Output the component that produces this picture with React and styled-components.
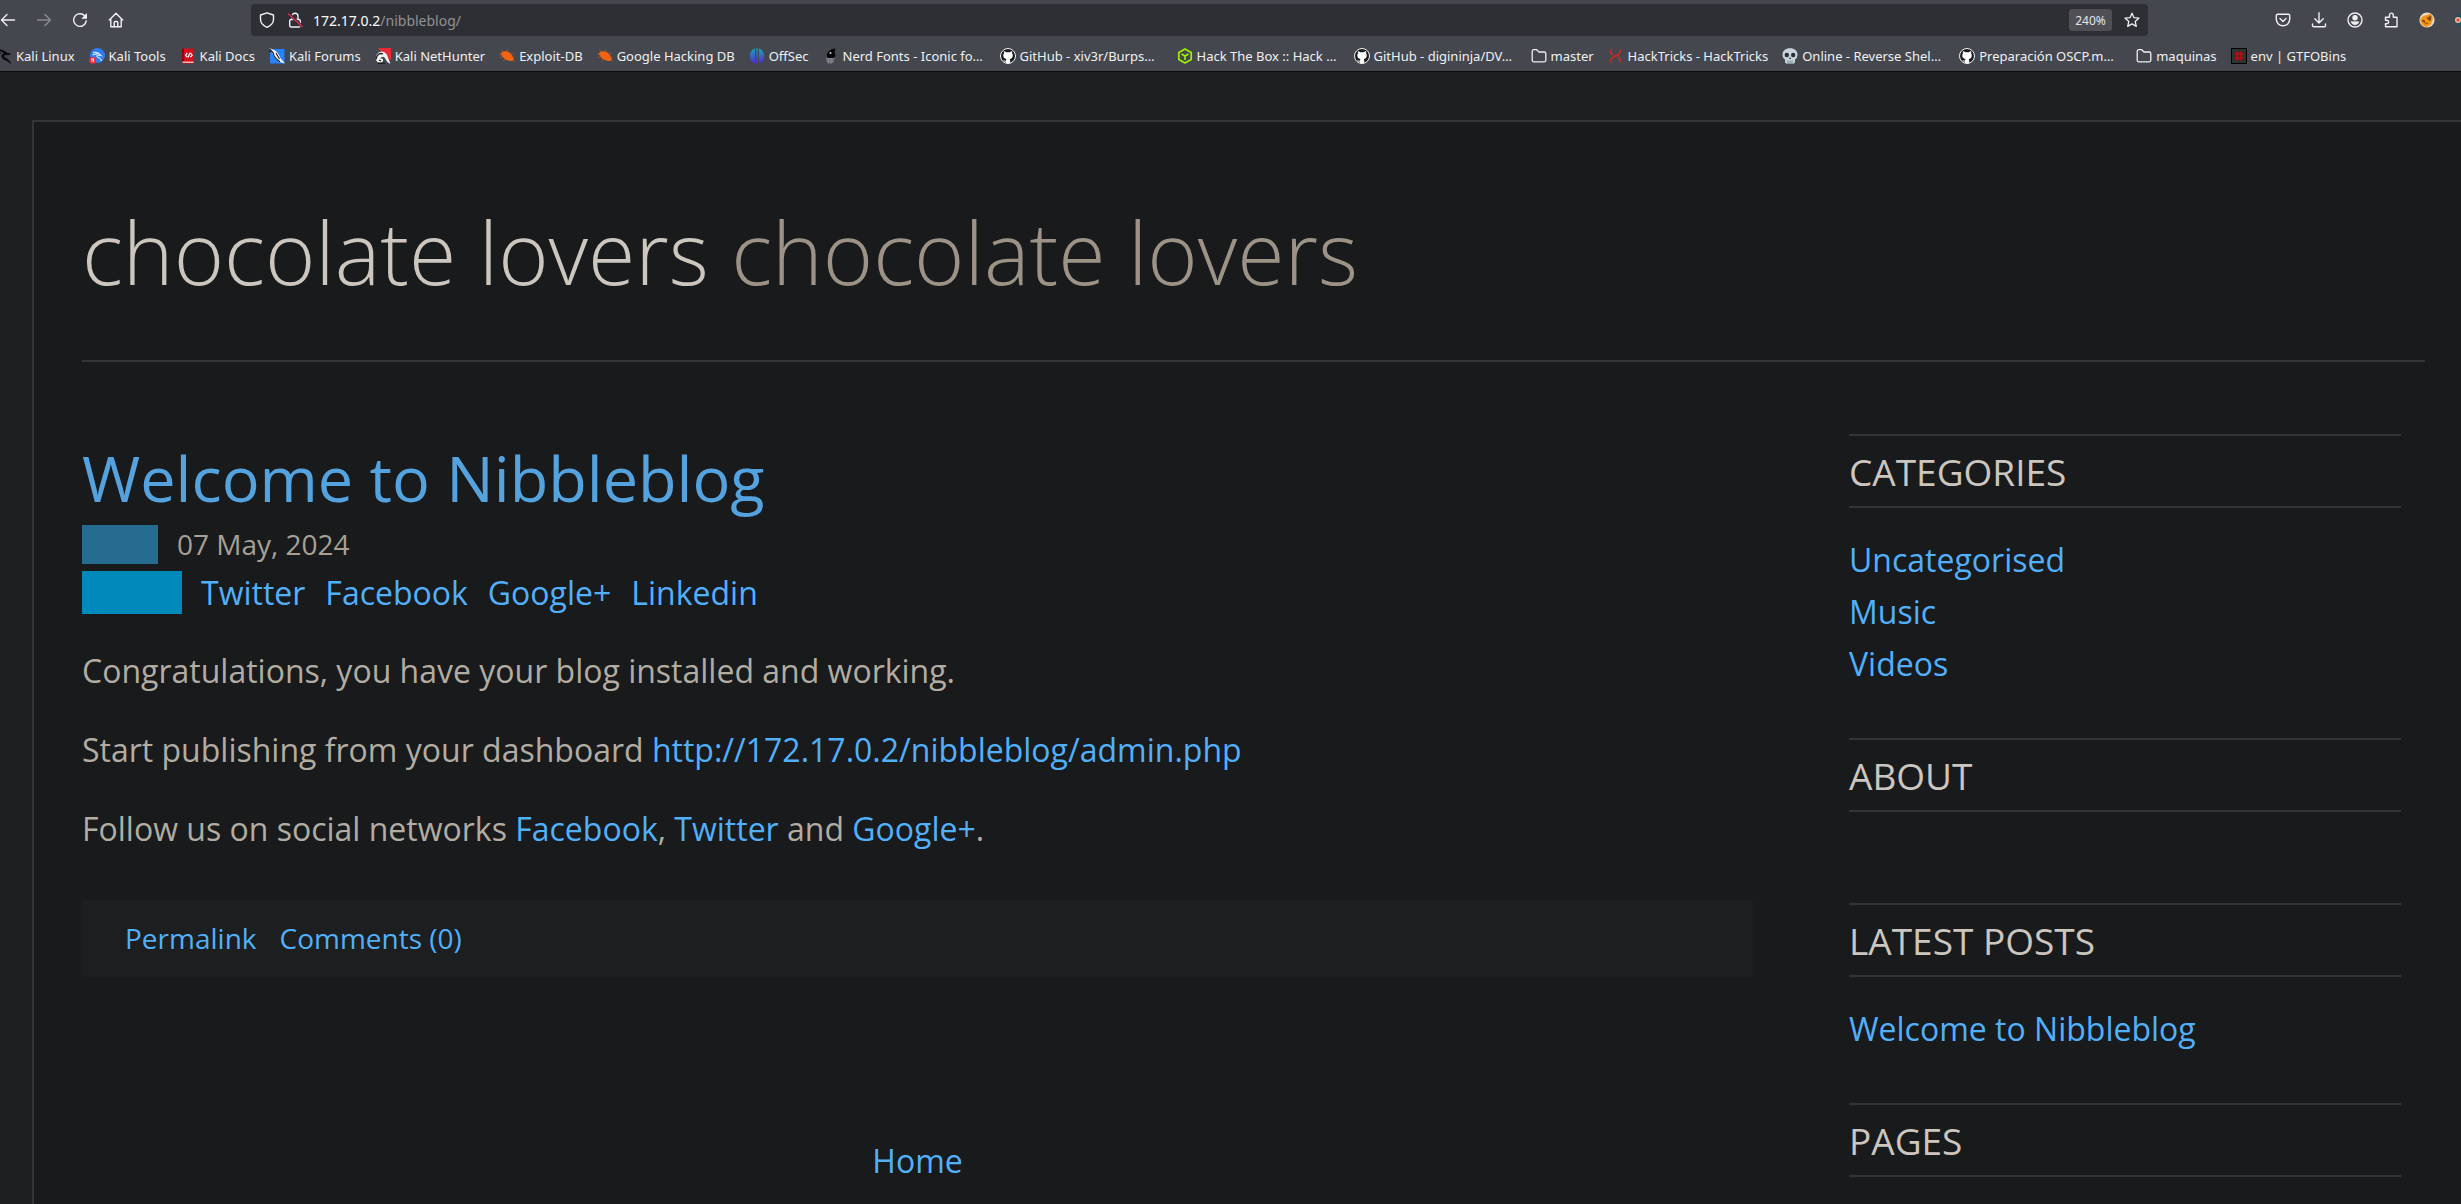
import React from "react";
import styled, { createGlobalStyle } from "styled-components";

const chrome = "#44474e";
const ink = "#181a1b";

const GlobalStyle = createGlobalStyle`
  *, *::before, *::after { box-sizing: border-box; }
  body { margin: 0; background: #1c1e1f; }
  h1, h2, h3, p, ul { margin: 0; padding: 0; font-weight: 400; }
  ul { list-style: none; }
  a { text-decoration: none; color: inherit; }
  svg { display: block; flex: none; }
`;

const Window = styled.div`
  display: flex;
  flex-direction: column;
  min-height: 100vh;
  overflow: hidden;
  font-family: "Open Sans", "Noto Sans", sans-serif;
`;

/* ---------- browser chrome ---------- */

const Chrome = styled.header`
  background: ${chrome};
  border-bottom: 1px solid #0c0c0d;
  color: #f0f0f2;
  font-family: "Noto Sans", sans-serif;
`;

const NavBar = styled.div`
  display: flex;
  align-items: center;
  height: 40px;
`;

const IconButton = styled.button`
  display: flex;
  align-items: center;
  justify-content: center;
  flex: none;
  width: ${(p) => p.$width || 36}px;
  height: 32px;
  padding: 0;
  border: 0;
  background: none;
  color: inherit;
  opacity: ${(p) => (p.disabled ? 0.4 : 1)};
`;

const NavGroup = styled.div`
  display: flex;
  flex: none;
  width: 251px;
  margin-left: -10px;
  margin-right: 10px;
`;

const AddressBar = styled.form`
  display: flex;
  align-items: center;
  flex: 1;
  height: 32px;
  padding-left: 2px;
  border-radius: 4px;
  background: #2e2f34;
  font-size: 14px;
`;

const Host = styled.label`
  padding-left: 4px;
  color: #fbfbfe;
`;

const PathInput = styled.input`
  flex: 1;
  min-width: 0;
  padding: 0;
  border: 0;
  outline: 0;
  background: none;
  color: #919196;
  font: inherit;
`;

const ZoomButton = styled.button`
  width: 43px;
  height: 22px;
  margin-right: 4px;
  padding: 0;
  border: 0;
  border-radius: 3px;
  background: #4f4f55;
  color: #e4e4e6;
  font: 12px "Noto Sans", sans-serif;
`;

const Extensions = styled.div`
  display: flex;
  flex: none;
  justify-content: flex-end;
  width: 313px;
  margin-right: -20px;
  margin-left: 20px;
`;

const Bookmarks = styled.nav`
  display: flex;
  align-items: center;
  gap: 14px;
  height: 31px;
  margin-left: -4px;
  white-space: nowrap;
  font-size: 13px;
`;

const Bookmark = styled.a`
  display: flex;
  align-items: center;
  flex: none;
  gap: 4px;
`;

const BookmarkLabel = styled.span`
  width: ${(p) => (p.$clipped ? "143px" : "auto")};
`;

/* ---------- blog ---------- */

const Page = styled.div`
  flex: 1;
  margin: 48px 0 0 32px;
  padding: 70px 36px 0 48px;
  border: 2px solid #333638;
  border-right: 0;
  border-bottom: 0;
  background: ${ink};
  color: #b2aca2;
  font-size: 32px;
  line-height: 48px;
`;

const BlogHeader = styled.header`
  padding-bottom: 48px;
  border-bottom: 2px solid #333638;
`;

const BlogTitle = styled.h1`
  color: #ccc6bf;
  font-size: 86px;
  font-weight: 300;
  line-height: 120px;
`;

const Slogan = styled.span`
  color: #9c9386;
`;

const Columns = styled.div`
  display: flex;
  gap: 96px;
  padding: 72px 24px 0 0;
`;

const Main = styled.main`
  flex: 1;
  min-width: 0;
`;

const Link = styled.a`
  color: #52b0fb;
`;

const PostTitle = styled.h2`
  margin-bottom: 3px;
  color: #54a3df;
  font-size: 63px;
  line-height: 88px;
`;

const MetaRow = styled.div`
  display: flex;
  gap: 19px;
  height: ${(p) => p.$height}px;
  margin-bottom: ${(p) => p.$after}px;
  font-size: ${(p) => p.$size}px;
  line-height: ${(p) => p.$line}px;
  color: #a8a095;
`;

const Swatch = styled.span`
  width: ${(p) => p.$width}px;
  background: ${(p) => p.$color};
`;

const ShareLinks = styled.div`
  display: flex;
  gap: 20px;
`;

const PostBody = styled.div`
  display: flex;
  flex-direction: column;
  gap: 31px;
`;

const PostFooter = styled.footer`
  display: flex;
  align-items: center;
  gap: 23px;
  height: 77px;
  margin-top: 47px;
  padding: 0 43px 2px;
  background: #1c1e1f;
  font-size: 28px;
`;

const Pager = styled.nav`
  margin-top: 160px;
  text-align: center;
`;

const Sidebar = styled.aside`
  flex: none;
  width: 552px;
`;

const Widget = styled.section`
  padding-bottom: 48px;
  &:last-child { padding-bottom: 0; }
`;

const WidgetTitle = styled.h3`
  padding-top: 2px;
  border: solid #333638;
  border-width: 2px 0;
  color: #ccc6bf;
  font-size: 37px;
  line-height: 68px;
  text-transform: uppercase;
`;

const WidgetList = styled.ul`
  min-height: 17px;
  margin-top: 26px;
  line-height: 52px;
`;

/* ---------- icons ---------- */

const Line = ({ children, size = 16, w = 1.4 }) => (
  <svg width={size} height={size} viewBox="0 0 16 16" fill="none" stroke="currentColor"
    strokeWidth={w} strokeLinecap="round" strokeLinejoin="round" aria-hidden="true">
    {children}
  </svg>
);
const Art = ({ children }) => (
  <svg width="16" height="16" viewBox="0 0 16 16" aria-hidden="true">{children}</svg>
);

const Back = () => <Line><path d="M14.500 8H1.500M7 2.500L1.500 8 7 13.500" /></Line>;
const Forward = () => <Line><path d="M1.500 8h13M9 2.500L14.500 8 9 13.500" /></Line>;
const Reload = () => (
  <Line><path d="M14.200 8.800A6.300 6.300 0 1 1 11.600 2.900L13 4" /><path d="M15 1v5.700H9.300z" fill="currentColor" stroke="none" /></Line>
);
const HomeIcon = () => (
  <Line><path d="M1.300 8L8 1.300 14.700 8M2.800 7v7.700h10.400V7" /><path d="M6.200 14.500V10.500a1 1 0 0 1 1-1h1.600a1 1 0 0 1 1 1v4" /></Line>
);
const Shield = () => (
  <Line><path d="M8 .8L14.500 3v4.500c0 3.500-2.700 6-6.500 7.800-3.800-1.800-6.500-4.300-6.500-7.800V3z" /></Line>
);
const Lock = () => (
  <Line><rect x="2.700" y="7.500" width="10.600" height="7.500" rx="1.500" /><path d="M5 7.300V4.200a3 3 0 0 1 6 0v3.100" />
    <path d="M2.500 2.200L15 14.500" stroke="#2e2f34" strokeWidth="3" /><path d="M1.500 2L15 14.500" stroke="#e22850" strokeWidth="1.500" /></Line>
);
const Star = () => (
  <Line w={1.300}><path d="M8 1.200l2 4.500 4.900.5-3.700 3.300 1.100 4.900L8 11.900l-4.300 2.500 1.100-4.900L1.100 6.200l4.900-.5z" /></Line>
);
const Pocket = () => (
  <Line><path d="M2.700 2.200h10.600a1.400 1.400 0 0 1 1.400 1.400V7.300a6.700 6.500 0 0 1-13.400 0V3.600a1.400 1.400 0 0 1 1.400-1.400z" /><path d="M5 6.500l3 3 3-3" /></Line>
);
const Download = () => (
  <Line><path d="M8 .8v9.700M3.800 6.800L8 11l4.200-4.200M1.500 12v1.500a1.300 1.300 0 0 0 1.300 1.300h10.400a1.300 1.300 0 0 0 1.300-1.300V12" /></Line>
);
const Account = () => (
  <Line><circle cx="8" cy="8" r="7" /><circle cx="8" cy="5.800" r="2" fill="currentColor" /><path d="M4.300 9.700h7.400c-.3 2-1.700 3-3.700 3s-3.400-1-3.700-3z" fill="currentColor" strokeWidth=".6" /></Line>
);
const Puzzle = () => (
  <Line><path d="M2.500 14.800V11.800h1.300a1.800 1.800 0 0 0 0-3.600H2.500V5.200h4V3a1.900 1.900 0 0 1 3.800 0v2.200h3.700v9.600z" /></Line>
);
const Fox = () => (
  <Art><circle cx="8" cy="8" r="7.600" fill="#e9d9c2" /><path d="M1 8l3-4 4-1 4-1.500 2 5-2.500 6.500-4.500 2L3 12.500z" fill="#f39314" />
    <path d="M3 9l2-1 1 3M8 6l4-2-1 5zM6 12l3-1" fill="#7b4411" stroke="#7b4411" strokeWidth=".8" /></Art>
);
const Creature = () => (
  <Art><path d="M0 7c1-4 4-6 7-6h9v14H6c-3 0-6-4-6-8z" fill="#1e5262" /><circle cx="3" cy="8" r="3" fill="#f0b9a0" /><circle cx="3" cy="8" r="1.500" fill="#e33c2c" /></Art>
);

const Dragon = () => (
  <Art><path d="M2 1.500c4 .5 7 1.500 9 3.700l3.500.8-2.500.8c-3-.7-4.500 0-4.200 1.600.4 2.200 5 1.400 6.500 7.100-2.300-4-7.500-3.200-8.200-6.500C5.300 7 6.500 6 8.500 5.700 6.500 3.500 4 3 2 1.500zM5 5c-1 .5-2 1-3 2" fill="#08080a" stroke="#08080a" strokeWidth=".9" /></Art>
);
const Tools = () => (
  <Art><circle cx="8.500" cy="7.500" r="7.500" fill="#2b7df0" /><path d="M4 4.500c3-.5 6 .5 8 3-3-1-5 0-3.500 1.500 2 .6 3.500 1.500 4 4M3.500 7c2-1 3-1.200 5-.8" fill="none" stroke="#cfe4ff" strokeWidth="1.300" />
    <circle cx="3.600" cy="12.400" r="3.400" fill="#ea2a3d" /><path d="M2.100 10.900h3M3 10.900v3.200M4.500 10.900v3.200" stroke="#fff" strokeWidth=".8" /></Art>
);
const Docs = () => (
  <Art><path d="M2 .5h11.500v15H3L2 14z" fill="#d40f1d" /><path d="M2 .5h2v13H2z" fill="#85040e" /><path d="M2.500 14.200h11" stroke="#f4dede" strokeWidth="1.200" />
    <path d="M7.300 5L5.500 7.200l1.800 2M10 4.800L8 9.500M10.300 5l1.900 2.200-1.900 2" fill="none" stroke="#fff" strokeWidth="1.200" /></Art>
);
const Forums = () => (
  <Art><path d="M1 1h14.500v14.500H1z" fill="#2583ff" /><path d="M0 0l5.500 2.200c3 1.500 5 5 6 8l4.500 5.300-5-1.500C7 12 4 7.500 3.500 5z" fill="#f5f7fb" /><path d="M.5.800l3.500 3.700c.5 3 3 6.500 7 9.300M7 5l3.500 6M0 3l2 1" stroke="#15181e" fill="none" strokeWidth="1.100" /></Art>
);
const NetHunter = () => (
  <Art><path d="M3 0h13v12.500L11 9z" fill="#ee2737" /><path d="M1 12C0 6 4.500 2 9 4c4 2 4 7 6.500 11.500C12 15 11 11.500 9.500 9.500 8 8 5.500 9 5.500 11c1.500-1 3 0 2.500 2-1 2.500-6 2-7-1z" fill="#f4f4f4" /><path d="M1 11.500C1.500 6.500 5 4.500 8 6M4 12l2 1M3 15.300h7" fill="none" stroke="#1b1c20" strokeWidth="1.300" /></Art>
);
const Bug = () => (
  <Art><path d="M2 5c3-3 8-2 10.500 1.500 1.300 1.900 2 3.500 2.500 6-3.500 1-8 0-10.500-2.800C3 8.300 2 7 2 5z" fill="#f26411" />
    <path d="M4 4L2.500 1.800M8 3.800L8.500 1.500M11.300 6l3-1M3 9L.5 9.700M6 11l-1.500 2.500M12.500 9l3 .5M2 6.500L0 6M13.500 11.500l2 2" stroke="#b9541d" strokeWidth=".8" /></Art>
);
const OffSec = () => (
  <Art><defs><linearGradient id="offsec" gradientUnits="userSpaceOnUse" x1="0" y1="0" x2="0" y2="16"><stop offset="0" stopColor="#16a6b8" /><stop offset="1" stopColor="#5b25d6" /></linearGradient></defs>
    <path d="M6 .5v15C2.500 14.500 1 11.500 1 8s1.500-6.500 5-7.500zM7.300.3h1.400v15.400H7.300zM10 .5c3.500 1 5 4 5 7.500s-1.500 6.500-5 7.500z" fill="url(#offsec)" /></Art>
);
const Nerd = () => (
  <Art><path d="M3 9.500h8.500l-.8 5L7 16l-3-1.200z" fill="#6a6c70" /><path d="M3 10.500h8.500M3.500 13h7.500M5.500 9.500v6M8.500 9.500v6" stroke="#8d8f93" strokeWidth=".6" /><path d="M9 1l3.500-.5-1 3.500 1 4-2 2H4.500L3.500 7 5 4z" fill="#060607" /><circle cx="7.500" cy="5" r="1" fill="#d6d6d6" /></Art>
);
const GitHub = () => (
  <Art><circle cx="8" cy="8" r="7.500" fill="#1b1c20" stroke="#f4f4f5" /><path d="M3.900 3.200c1 0 1.800.5 2.400 1h3.400c.6-.5 1.400-1 2.400-1 .2.700.2 1.500 0 2 .9 1 .9 4-.4 5-.6.5-1.300.7-2 .8.400.5.500 1 .5 1.600v2.600H6v-1.500c-1.500.3-2-.5-2.600-1.600 1 .5 1.600.9 2.600.7 0-.7.200-1.300.5-1.800-2.500-.3-3.200-1.800-3.200-3.500 0-1 .2-1.700.7-2.300-.2-.7-.3-1.400-.1-2z" fill="#fff" /></Art>
);
const Cube = () => (
  <Art><path d="M8 1l6.200 3.500v7L8 15l-6.200-3.500v-7zM4.500 6L8 8l3.500-2M8 8v4" fill="none" stroke="#9fef00" strokeWidth="1.700" strokeLinejoin="round" /></Art>
);
const Folder = () => (
  <Line w={1.300}><path d="M1.200 3.200A1.500 1.500 0 0 1 2.700 1.700h3L8 4h5.300a1.500 1.500 0 0 1 1.500 1.500v6.800a1.500 1.500 0 0 1-1.500 1.500H2.700a1.500 1.500 0 0 1-1.500-1.500z" /></Line>
);
const Tricks = () => (
  <Art><path d="M3 1.500v3.500l1.500 2M3 14.500V11l3-2.500 4-1.500L12 4.500v-3M12 14.500V11l-1.500-2" fill="none" stroke="#e0241a" strokeWidth="1.500" /></Art>
);
const Skull = () => (
  <Art><path d="M8 .2c4.500 0 7.500 2.500 7.500 6.500 0 2.300-1 3.800-2.500 4.800v3l-1.500 1.300H4.500L3 14.500v-3C1.500 10.500.5 9 .5 6.700.5 2.700 3.500.2 8 .2z" fill="#c7d3dc" />
    <circle cx="4.800" cy="7" r="2.200" fill="#24303a" /><circle cx="11.200" cy="7" r="2.200" fill="#24303a" /><path d="M8 9l1 2H7z" fill="#24303a" /><path d="M6 12.500v3.500M8 12.500v3.500M10 12.500v3.500" stroke="#5f6e7a" strokeWidth=".8" /></Art>
);
const Hash = () => (
  <Art><rect x=".5" y=".5" width="15" height="15" fill="#2f3234" stroke="#000" /><path d="M6 3v10M10 3v10M3.500 6h9M3.500 10h9" stroke="#c8080c" strokeWidth="1.500" /></Art>
);

const bookmarks = [
  { icon: Dragon, label: "Kali Linux" },
  { icon: Tools, label: "Kali Tools" },
  { icon: Docs, label: "Kali Docs" },
  { icon: Forums, label: "Kali Forums" },
  { icon: NetHunter, label: "Kali NetHunter" },
  { icon: Bug, label: "Exploit-DB" },
  { icon: Bug, label: "Google Hacking DB" },
  { icon: OffSec, label: "OffSec" },
  { icon: Nerd, label: "Nerd Fonts - Iconic fo…", clipped: true },
  { icon: GitHub, label: "GitHub - xiv3r/Burps…", clipped: true },
  { icon: Cube, label: "Hack The Box :: Hack …", clipped: true },
  { icon: GitHub, label: "GitHub - digininja/DV…", clipped: true },
  { icon: Folder, label: "master" },
  { icon: Tricks, label: "HackTricks - HackTricks" },
  { icon: Skull, label: "Online - Reverse Shel…", clipped: true },
  { icon: GitHub, label: "Preparación OSCP.m…", clipped: true },
  { icon: Folder, label: "maquinas" },
  { icon: Hash, label: "env | GTFOBins" },
];

const widgets = [
  { title: "Categories", links: ["Uncategorised", "Music", "Videos"] },
  { title: "About", links: [] },
  { title: "Latest posts", links: ["Welcome to Nibbleblog"] },
];

export default function App() {
  return (
    <Window>
      <GlobalStyle />
      <Chrome>
        <NavBar>
          <NavGroup>
            <IconButton aria-label="Back"><Back /></IconButton>
            <IconButton aria-label="Forward" disabled><Forward /></IconButton>
            <IconButton aria-label="Reload"><Reload /></IconButton>
            <IconButton aria-label="Home"><HomeIcon /></IconButton>
          </NavGroup>
          <AddressBar>
            <IconButton type="button" $width={28} aria-label="Tracking protection"><Shield /></IconButton>
            <IconButton type="button" $width={28} aria-label="Connection not secure"><Lock /></IconButton>
            <Host htmlFor="address">172.17.0.2</Host>
            <PathInput id="address" defaultValue="/nibbleblog/" />
            <ZoomButton type="button">240%</ZoomButton>
            <IconButton type="button" $width={32} aria-label="Bookmark this page"><Star /></IconButton>
          </AddressBar>
          <Extensions>
            <IconButton aria-label="Save to Pocket"><Pocket /></IconButton>
            <IconButton aria-label="Downloads"><Download /></IconButton>
            <IconButton aria-label="Account"><Account /></IconButton>
            <IconButton aria-label="Extensions"><Puzzle /></IconButton>
            <IconButton aria-label="Fox extension"><Fox /></IconButton>
            <IconButton aria-label="More extensions"><Creature /></IconButton>
          </Extensions>
        </NavBar>
        <Bookmarks aria-label="Bookmarks">
          {bookmarks.map(({ icon: Icon, label, clipped }) => (
            <Bookmark href="#" key={label}>
              <Icon />
              <BookmarkLabel $clipped={clipped}>{label}</BookmarkLabel>
            </Bookmark>
          ))}
        </Bookmarks>
      </Chrome>

      <Page>
        <BlogHeader>
          <BlogTitle>chocolate lovers <Slogan>chocolate lovers</Slogan></BlogTitle>
        </BlogHeader>
        <Columns>
          <Main>
            <article>
              <PostTitle><a href="#">Welcome to Nibbleblog</a></PostTitle>
              <MetaRow $height={39} $after={7} $size={28} $line={38}>
                <Swatch $width={76} $color="#266b90" />
                <time dateTime="2024-05-07">07 May, 2024</time>
              </MetaRow>
              <MetaRow $height={43} $after={33} $size={32} $line={44}>
                <Swatch $width={100} $color="#008abb" />
                <ShareLinks>
                  <Link href="#">Twitter</Link>
                  <Link href="#">Facebook</Link>
                  <Link href="#">Google+</Link>
                  <Link href="#">Linkedin</Link>
                </ShareLinks>
              </MetaRow>
              <PostBody>
                <p>Congratulations, you have your blog installed and working.</p>
                <p>Start publishing from your dashboard <Link href="#">http://172.17.0.2/nibbleblog/admin.php</Link></p>
                <p>Follow us on social networks <Link href="#">Facebook</Link>, <Link href="#">Twitter</Link> and <Link href="#">Google+</Link>.</p>
              </PostBody>
              <PostFooter>
                <Link href="#">Permalink</Link>
                <Link href="#">Comments (0)</Link>
              </PostFooter>
            </article>
            <Pager><Link href="#">Home</Link></Pager>
          </Main>
          <Sidebar>
            {widgets.map(({ title, links }) => (
              <Widget key={title}>
                <WidgetTitle>{title}</WidgetTitle>
                <WidgetList>
                  {links.map((text) => <li key={text}><Link href="#">{text}</Link></li>)}
                </WidgetList>
              </Widget>
            ))}
            <Widget><WidgetTitle>Pages</WidgetTitle></Widget>
          </Sidebar>
        </Columns>
      </Page>
    </Window>
  );
}
